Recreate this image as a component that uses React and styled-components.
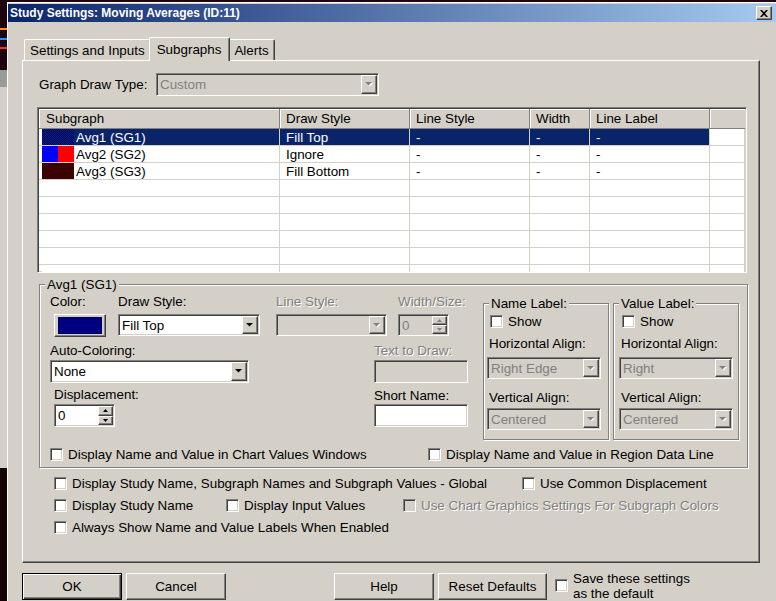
import React from "react";
import styled, { createGlobalStyle, css } from "styled-components";

const FACE = "#d4d0c8";
const SHADOW = "#808080";
const DARK = "#404040";
const NAVY = "#0a246a";

const GlobalStyle = createGlobalStyle`
  * { box-sizing: border-box; }
  html, body { margin: 0; padding: 0; background: #1e0610; }
  body {
    font-family: "Liberation Sans", Arial, sans-serif;
    font-size: 13.4px;
    line-height: 15px;
    color: #000;
  }
`;

const sunken = css`
  border: 1px solid;
  border-color: ${SHADOW} #fff #fff ${SHADOW};
  box-shadow: inset 1px 1px 0 ${DARK}, inset -1px -1px 0 ${FACE};
  padding: 1px;
`;

const raised = css`
  border: 1px solid;
  border-color: #fff ${DARK} ${DARK} #fff;
  box-shadow: inset -1px -1px 0 ${SHADOW};
  background: ${FACE};
`;

const greyed = css`
  color: ${SHADOW};
  text-shadow: 1px 1px 0 #fff;
`;

const Screen = styled.div`
  width: 776px;
  height: 601px;
  display: flex;
  overflow: hidden;
`;

const Backdrop = styled.div`
  width: 7px;
  flex: none;
  display: flex;
  flex-direction: column;
`;

const Streak = styled.div`
  height: ${p => p.$h || 0}px;
  flex: ${p => (p.$fill ? 1 : "none")};
  background: ${p => p.$c};
`;

const Dialog = styled.div`
  flex: 1;
  margin-top: 2px;
  padding-top: 1px;
  background: ${FACE};
  border-top: 1px solid #fff;
  border-left: 1px solid #fff;
  display: flex;
  flex-direction: column;
`;

const TitleBar = styled.div`
  height: 18px;
  flex: none;
  display: flex;
  align-items: center;
  justify-content: space-between;
  padding: 0 4px 0 2px;
  background: linear-gradient(to right, ${NAVY}, #a6caf0);
  color: #fff;
  font-weight: bold;
  font-size: 12px;
`;

const CloseButton = styled.div`
  width: 16px;
  height: 14px;
  ${raised};
  display: flex;
  align-items: center;
  justify-content: center;
`;

const Body = styled.div`
  padding: 15px 0 0 14px;
`;

const TabRow = styled.div`
  display: flex;
  align-items: flex-end;
  height: 23px;
  padding-left: 2px;
`;

const Tab = styled.div`
  position: relative;
  z-index: ${p => (p.$active ? 2 : 1)};
  height: ${p => (p.$active ? 24 : 21)}px;
  margin: 0 ${p => (p.$active ? -2 : 0)}px ${p => (p.$active ? -1 : 0)}px;
  padding: 0 ${p => (p.$active ? 8 : 5)}px 0 ${p => (p.$active ? 7 : 5)}px;
  display: flex;
  align-items: center;
  background: ${FACE};
  border-top: 1px solid #fff;
  border-left: 1px solid #fff;
  border-right: 1px solid ${DARK};
  box-shadow: inset -1px 0 0 ${SHADOW};
  border-radius: 2px 2px 0 0;
  white-space: nowrap;
`;

const Panel = styled.div`
  width: 738px;
  height: 503px;
  border-top: 1px solid #fff;
  border-left: 1px solid #fff;
  border-right: 1px solid ${DARK};
  border-bottom: 1px solid ${DARK};
  box-shadow: inset -1px -1px 0 ${SHADOW};
  display: flex;
  flex-direction: column;
  align-items: flex-start;
`;

const DrawTypeRow = styled.div`
  display: flex;
  align-items: center;
  margin: 12px 0 0 16px;
`;

const RowLabel = styled.span`
  width: ${p => p.$w}px;
  flex: none;
`;

const Combo = styled.div`
  width: ${p => p.$w}px;
  height: ${p => p.$h || 22}px;
  flex: none;
  margin: ${p => p.$m || 0};
  ${sunken};
  display: flex;
  background: ${p => (p.$disabled ? FACE : "#fff")};
`;

const ComboValue = styled.span`
  flex: 1;
  display: flex;
  align-items: center;
  padding-left: 2px;
  white-space: nowrap;
  overflow: hidden;
  color: ${p => (p.$disabled ? SHADOW : "#000")};
`;

const DropButton = styled.span`
  width: 16px;
  flex: none;
  ${raised};
  display: flex;
  align-items: center;
  justify-content: center;
`;

const SpinButtons = styled.span`
  width: 15px;
  flex: none;
  display: flex;
  flex-direction: column;
`;

const SpinButton = styled.span`
  flex: 1;
  ${raised};
  display: flex;
  align-items: center;
  justify-content: center;
`;

const TextBox = styled.div`
  width: ${p => p.$w}px;
  height: ${p => p.$h || 23}px;
  ${sunken};
  background: ${p => (p.$disabled ? FACE : "#fff")};
`;

const List = styled.div`
  width: 710px;
  height: 166px;
  flex: none;
  margin: 11px 0 0 14px;
  ${sunken};
  background: #fff;
  overflow: hidden;
`;

const COLUMNS = "241px 130px 120px 60px 120px 1fr";

const ListHeader = styled.div`
  display: grid;
  grid-template-columns: ${COLUMNS};
  height: 20px;
  background: ${FACE};
`;

const HeaderCell = styled.div`
  display: flex;
  align-items: center;
  padding-left: 6px;
  border-right: 1px solid ${SHADOW};
  border-bottom: 1px solid ${SHADOW};
  box-shadow: inset 1px 1px 0 #fff;
  white-space: nowrap;
  &:first-child { padding-left: 7px; }
  &:last-child { border-right: none; }
`;

const ListRow = styled.div`
  display: grid;
  grid-template-columns: ${COLUMNS};
  height: 17px;
`;

const Cell = styled.div`
  display: flex;
  align-items: center;
  padding-left: 6px;
  border-right: 1px solid ${FACE};
  border-bottom: 1px solid ${FACE};
  white-space: nowrap;
  background: ${p => (p.$selected ? NAVY : "#fff")};
  color: ${p => (p.$selected ? "#fff" : "#000")};
`;

const NameCell = styled.div`
  display: flex;
  padding-left: 3px;
  border-right: 1px solid ${FACE};
  border-bottom: 1px solid ${FACE};
`;

const Swatch = styled.span`
  width: 32px;
  flex: none;
  background: ${p => p.$bg};
`;

const NameText = styled.span`
  flex: 1;
  display: flex;
  align-items: center;
  padding-left: 2px;
  white-space: nowrap;
  background: ${p => (p.$selected ? NAVY : "#fff")};
  color: ${p => (p.$selected ? "#fff" : "#000")};
`;

const Group = styled.fieldset`
  width: ${p => p.$w}px;
  flex: none;
  margin: ${p => p.$m || 0};
  padding: ${p => p.$pad || 0};
  min-inline-size: 0;
  border: 1px solid ${SHADOW};
  box-shadow: inset 1px 1px 0 #fff, 1px 1px 0 #fff;
`;

const GroupTitle = styled.legend`
  margin-left: 5px;
  padding: 0 2px;
  line-height: 15px;
  background: ${FACE};
`;

const TopArea = styled.div`
  display: flex;
  align-items: flex-start;
`;

const LeftArea = styled.div`
  width: 443px;
  flex: none;
  display: flex;
  flex-direction: column;
`;

const FieldRow = styled.div`
  display: flex;
  align-items: flex-start;
  padding-left: ${p => p.$indent || 0}px;
  margin-top: ${p => p.$top || 0}px;
`;

const Field = styled.div`
  width: ${p => (p.$w ? `${p.$w}px` : "auto")};
  flex: none;
  display: flex;
  flex-direction: column;
  align-items: flex-start;
  gap: ${p => p.$gap || 0}px;
  margin-top: ${p => p.$top || 0}px;
`;

const Caption = styled.span`
  display: block;
  white-space: nowrap;
  margin: ${p => p.$m || 0};
  ${p => p.$disabled && greyed};
`;

const ColorButton = styled.div`
  width: 52px;
  height: 23px;
  margin-left: 4px;
  ${raised};
  padding: 2px 3px;
`;

const ColorChip = styled.div`
  height: 100%;
  background: #000080;
  border: 1px solid #000060;
`;

const SubBody = styled.div`
  display: flex;
  flex-direction: column;
  align-items: flex-start;
  padding: 3px 0 9px ${p => p.$inset}px;
`;

const CheckItem = styled.div`
  display: flex;
  align-items: center;
  gap: 5px;
  flex: none;
  width: ${p => (p.$w ? `${p.$w}px` : "auto")};
  margin: ${p => p.$m || 0};
  white-space: nowrap;
  ${p => p.$disabled && greyed};
`;

const CheckBox = styled.span`
  width: 13px;
  height: 13px;
  flex: none;
  ${sunken};
  background: ${p => (p.$disabled ? FACE : "#fff")};
`;

const CheckLine = styled.div`
  display: flex;
  align-items: center;
  height: 22px;
  padding-left: ${p => p.$indent || 0}px;
  margin-top: ${p => p.$top || 0}px;
`;

const ButtonRow = styled.div`
  display: flex;
  align-items: flex-start;
  margin-top: 10px;
`;

const PushButton = styled.div`
  width: ${p => p.$w}px;
  height: 27px;
  flex: none;
  margin-left: ${p => p.$gap || 0}px;
  display: flex;
  align-items: center;
  justify-content: center;
  white-space: nowrap;
  ${p =>
    p.$default
      ? css`
          background: ${FACE};
          border: 1px solid #000;
          box-shadow: inset 1px 1px 0 #fff, inset -1px -1px 0 ${DARK}, inset -2px -2px 0 ${SHADOW};
        `
      : raised};
`;

const SaveNote = styled.div`
  display: flex;
  align-items: flex-start;
  gap: 5px;
  margin-left: 8px;
`;

const SaveBox = styled(CheckBox)`
  margin-top: 6px;
`;

const SaveText = styled.span`
  margin-top: -2px;
`;

function DownArrow({ disabled }) {
  return (
    <svg width="8" height="5" viewBox="0 0 8 5">
      {disabled && <path d="M1 1h7L4.5 4.5z" fill="#fff" />}
      <path d="M0 0h7L3.5 3.5z" fill={disabled ? SHADOW : "#000"} />
    </svg>
  );
}

function TinyArrow({ up, disabled }) {
  return (
    <svg width="5" height="3" viewBox="0 0 5 3">
      <path d={up ? "M0 3h5L2.5 0z" : "M0 0h5L2.5 3z"} fill={disabled ? SHADOW : "#000"} />
    </svg>
  );
}

function CloseGlyph() {
  return (
    <svg width="8" height="7" viewBox="0 0 8 7">
      <path d="M0 0h2l2 2.3L6 0h2L5 3.5 8 7H6L4 4.7 2 7H0l3-3.5z" fill="#000" />
    </svg>
  );
}

function Select({ w, h, value, disabled, m }) {
  return (
    <Combo $w={w} $h={h} $disabled={disabled} $m={m}>
      <ComboValue $disabled={disabled}>{value}</ComboValue>
      <DropButton>
        <DownArrow disabled={disabled} />
      </DropButton>
    </Combo>
  );
}

function Spinner({ w, h, value, disabled }) {
  return (
    <Combo $w={w} $h={h} $disabled={disabled}>
      <ComboValue $disabled={disabled}>{value}</ComboValue>
      <SpinButtons>
        <SpinButton><TinyArrow up disabled={disabled} /></SpinButton>
        <SpinButton><TinyArrow disabled={disabled} /></SpinButton>
      </SpinButtons>
    </Combo>
  );
}

function Check({ label, disabled, w, m }) {
  return (
    <CheckItem $disabled={disabled} $w={w} $m={m}>
      <CheckBox $disabled={disabled} />
      {label}
    </CheckItem>
  );
}

function LabelGroup({ title, horizontal, inset, m }) {
  return (
    <Group $w={126} $m={m}>
      <GroupTitle>{title}</GroupTitle>
      <SubBody $inset={inset}>
        <Check label="Show" m="0 0 0 3px" />
        <Caption $m="7px 0 0 2px">Horizontal Align:</Caption>
        <Select w={114} value={horizontal} disabled m="6px 0 0 0" />
        <Caption $m="11px 0 0 2px">Vertical Align:</Caption>
        <Select w={114} value="Centered" disabled m="3px 0 0 0" />
      </SubBody>
    </Group>
  );
}

const DITHER = `repeating-conic-gradient(${NAVY} 0 25%, #000070 0 50%) 0 0 / 2px 2px`;

const subgraphs = [
  { name: "Avg1 (SG1)", style: "Fill Top", swatch: DITHER, selected: true },
  { name: "Avg2 (SG2)", style: "Ignore", swatch: "linear-gradient(to right, #0000ff 50%, #ff0000 50%)" },
  { name: "Avg3 (SG3)", style: "Fill Bottom", swatch: "#3c0000" },
  {}, {}, {}, {}, {}, {},
];

const streaks = [
  [28, "#1e0610"], [2, "#ff8c1a"], [8, "#1e0610"], [2, "#2f8cff"], [7, "#1e0610"],
  [2, "#ff2a2a"], [21, "#1e0610"], [17, "#9a9a9a"], [381, FACE],
];

export default function App() {
  return (
    <>
      <GlobalStyle />
      <Screen>
        <Backdrop>
          {streaks.map(([h, c], i) => (
            <Streak key={i} $h={h} $c={c} />
          ))}
          <Streak $fill $c="#160306" />
        </Backdrop>

        <Dialog>
          <TitleBar>
            <span>Study Settings: Moving Averages (ID:11)</span>
            <CloseButton>
              <CloseGlyph />
            </CloseButton>
          </TitleBar>

          <Body>
            <TabRow>
              <Tab>Settings and Inputs</Tab>
              <Tab $active>Subgraphs</Tab>
              <Tab>Alerts</Tab>
            </TabRow>

            <Panel>
              <DrawTypeRow>
                <RowLabel $w={117}>Graph Draw Type:</RowLabel>
                <Select w={223} h={23} value="Custom" disabled />
              </DrawTypeRow>

              <List>
                <ListHeader>
                  <HeaderCell>Subgraph</HeaderCell>
                  <HeaderCell>Draw Style</HeaderCell>
                  <HeaderCell>Line Style</HeaderCell>
                  <HeaderCell>Width</HeaderCell>
                  <HeaderCell>Line Label</HeaderCell>
                  <HeaderCell />
                </ListHeader>
                {subgraphs.map((row, i) => (
                  <ListRow key={i}>
                    <NameCell>
                      <Swatch $bg={row.swatch || "#fff"} />
                      <NameText $selected={row.selected}>{row.name}</NameText>
                    </NameCell>
                    <Cell $selected={row.selected}>{row.style}</Cell>
                    <Cell $selected={row.selected}>{row.name && "-"}</Cell>
                    <Cell $selected={row.selected}>{row.name && "-"}</Cell>
                    <Cell $selected={row.selected}>{row.name && "-"}</Cell>
                    <Cell />
                  </ListRow>
                ))}
              </List>

              <Group $w={709} $m="4px 0 0 16px" $pad="2px 7px 2px 0">
                <GroupTitle>Avg1 (SG1)</GroupTitle>
                <TopArea>
                  <LeftArea>
                    <FieldRow $indent={10}>
                      <Field $w={68} $gap={5}>
                        <Caption>Color:</Caption>
                        <ColorButton>
                          <ColorChip />
                        </ColorButton>
                      </Field>
                      <Field $w={158} $gap={5}>
                        <Caption>Draw Style:</Caption>
                        <Select w={142} value="Fill Top" />
                      </Field>
                      <Field $w={122} $gap={5}>
                        <Caption $disabled>Line Style:</Caption>
                        <Select w={111} value="" disabled />
                      </Field>
                      <Field $gap={5}>
                        <Caption $disabled>Width/Size:</Caption>
                        <Spinner w={51} value="0" disabled />
                      </Field>
                    </FieldRow>

                    <FieldRow $indent={10} $top={6}>
                      <Field $w={324} $gap={2}>
                        <Caption>Auto-Coloring:</Caption>
                        <Select w={199} h={23} value="None" />
                      </Field>
                      <Field $gap={2}>
                        <Caption $disabled>Text to Draw:</Caption>
                        <TextBox $w={94} $disabled />
                      </Field>
                    </FieldRow>

                    <FieldRow $indent={14} $top={4}>
                      <Field $w={320} $gap={2}>
                        <Caption>Displacement:</Caption>
                        <Spinner w={61} h={23} value="0" />
                      </Field>
                      <Field $gap={1} $top={1}>
                        <Caption>Short Name:</Caption>
                        <TextBox $w={94} />
                      </Field>
                    </FieldRow>
                  </LeftArea>

                  <LabelGroup title="Name Label:" horizontal="Right Edge" inset={3} m="2px 0 0 0" />
                  <LabelGroup title="Value Label:" horizontal="Right" inset={5} m="2px 0 0 4px" />
                </TopArea>

                <CheckLine $indent={10} $top={3}>
                  <Check label="Display Name and Value in Chart Values Windows" w={378} />
                  <Check label="Display Name and Value in Region Data Line" />
                </CheckLine>
              </Group>

              <CheckLine $indent={31} $top={4}>
                <Check label="Display Study Name, Subgraph Names and Subgraph Values - Global" w={468} />
                <Check label="Use Common Displacement" />
              </CheckLine>
              <CheckLine $indent={31}>
                <Check label="Display Study Name" w={172} />
                <Check label="Display Input Values" w={177} />
                <Check label="Use Chart Graphics Settings For Subgraph Colors" disabled />
              </CheckLine>
              <CheckLine $indent={31}>
                <Check label="Always Show Name and Value Labels When Enabled" />
              </CheckLine>
            </Panel>

            <ButtonRow>
              <PushButton $w={100} $default>OK</PushButton>
              <PushButton $w={100} $gap={4}>Cancel</PushButton>
              <PushButton $w={100} $gap={108}>Help</PushButton>
              <PushButton $w={109} $gap={4}>Reset Defaults</PushButton>
              <SaveNote>
                <SaveBox />
                <SaveText>
                  Save these settings
                  <br />
                  as the default
                </SaveText>
              </SaveNote>
            </ButtonRow>
          </Body>
        </Dialog>
      </Screen>
    </>
  );
}
